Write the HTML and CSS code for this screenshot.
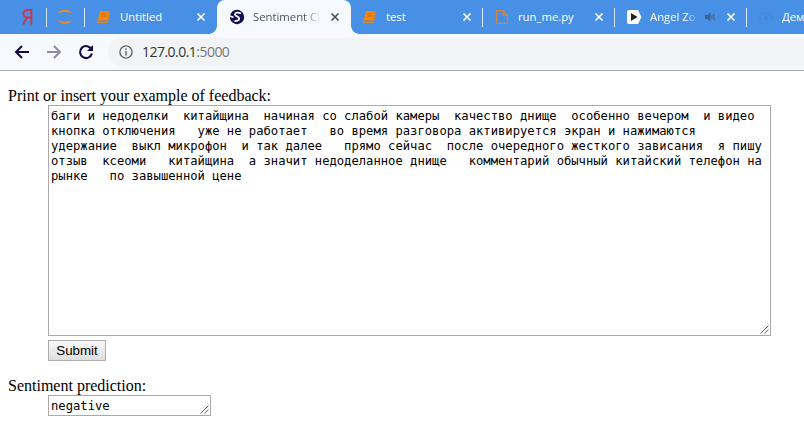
FILE: index.html
```html
<!DOCTYPE html>
<html lang="en">
<head>
<meta charset="utf-8">
<title>Sentiment Classifier</title>
<link rel="stylesheet" href="styles.css">
</head>
<body>
<div class="tabs">
  <div class="tab pinned first"><svg class="ya" width="12" height="18" viewBox="0 0 12 18"><path d="M10.300 1V16.500M10.300 2H6.500C1 2 1 9.500 6.500 9.500H10.300M6 9.500L2 16.500" fill="none" stroke="#c43a50" stroke-width="2.100"/></svg></div>
  <div class="tab pinned"><svg class="jup" width="18" height="18" viewBox="0 0 18 18" fill="#ee8431"><path d="M1.500 6C5-.2 13 .3 16.300 6C12.500 3.400 5.500 3.400 1.500 6ZM1.500 11.500C5.500 14.400 12.500 14.400 16.300 11.500C13 17.500 5 17.500 1.500 11.500Z"/></svg></div>
  <div class="tab"><svg class="icon" width="16" height="16" viewBox="0 0 16 16"><use href="#book"/></svg><span class="title">Untitled</span><svg class="close" width="10" height="10" viewBox="0 0 10 10"><use href="#x"/></svg></div>
  <div class="tab active"><svg class="icon" width="16" height="16" viewBox="0 0 16 16"><circle cx="8" cy="8" r="7.200" fill="#150a50"/><path d="M12 4.500C9 3 6 3.500 6 5.500C6 7.500 10.500 7.500 10.200 9.800C10 11.500 7.500 12.500 5.500 11.800M1 7L4.500 8.500" fill="none" stroke="#f5f8fe" stroke-width="1.900"/></svg><span class="title fade">Sentiment Cl</span><svg class="close" width="10" height="10" viewBox="0 0 10 10"><use href="#x"/></svg></div>
  <div class="tab"><svg class="icon" width="16" height="16" viewBox="0 0 16 16"><use href="#book"/></svg><span class="title">test</span><svg class="close" width="10" height="10" viewBox="0 0 10 10"><use href="#x"/></svg></div>
  <div class="tab"><svg class="icon" width="16" height="16" viewBox="0 0 16 16"><path d="M2.600 1.600H9L13.400 6V14.400H2.600ZM9 1.600V6H13.400" fill="none" stroke="#c8864e" stroke-width="1.400"/></svg><span class="title">run_me.py</span><svg class="close" width="10" height="10" viewBox="0 0 10 10"><use href="#x"/></svg></div>
  <div class="tab"><svg class="icon" width="16" height="16" viewBox="0 0 16 16"><path d="M3 1H12L15.500 8L12 15H3Q1 15 1 13V3Q1 1 3 1Z" fill="#fff"/><path d="M5 4L11.500 8L5 12Z" fill="#222"/></svg><span class="title fade angel">Angel Zo</span><svg class="sound" width="12" height="12" viewBox="0 0 12 12"><path d="M1 4H3.500L6.500 1.500V10.500L3.500 8H1Z" fill="#43638d"/><path d="M8 4V8M10 2.500V9.500" stroke="#43638d"/></svg><svg class="close" width="10" height="10" viewBox="0 0 10 10"><use href="#x"/></svg></div>
  <div class="tab"><svg class="icon" width="16" height="16" viewBox="0 0 16 16"><path d="M2 11V6L5 4L7 6V11M9 11V6L11 4L14 6V11" fill="none" stroke="#3f8edb" stroke-width="2"/></svg><span class="title">Дем</span></div>
</div>
<div class="toolbar">
  <svg class="nav" width="16" height="16" viewBox="0 0 16 16"><path d="M15 8H2M8 2L2 8L8 14" fill="none" stroke="#150a43" stroke-width="2"/></svg>
  <svg class="nav" width="16" height="16" viewBox="0 0 16 16"><path d="M1 8H14M8 2L14 8L8 14" fill="none" stroke="#908ba8" stroke-width="2"/></svg>
  <svg class="nav" width="16" height="16" viewBox="0 0 16 16"><path d="M13.500 5.500A6 6 0 1 0 13.900 9.500" fill="none" stroke="#150a43" stroke-width="2.100"/><path d="M15 1V7H9Z" fill="#150a43"/></svg>
  <div class="address"><svg width="14" height="14" viewBox="0 0 14 14"><circle cx="7" cy="7" r="6.100" fill="none" stroke="#666a6d" stroke-width="1.400"/><path d="M7 6V10.500M7 3.300V4.800" stroke="#666a6d" stroke-width="1.500"/></svg><span class="url">127.0.0.1<span class="port">:5000</span></span></div>
</div>
<main>
  <label for="feedback">Print or insert your example of feedback:</label>
  <div class="box big"><textarea id="feedback" spellcheck="false">баги и недоделки  китайщина  начиная со слабой камеры  качество днище  особенно вечером  и видео
кнопка отключения   уже не работает   во время разговора активируется экран и нажимаются
удержание  выкл микрофон  и так далее   прямо сейчас  после очередного жесткого зависания  я пишу
отзыв  ксеоми   китайщина  а значит недоделанное днище   комментарий обычный китайский телефон на
рынке   по завышенной цене</textarea><svg class="grip" width="9" height="9" viewBox="0 0 9 9"><use href="#grip"/></svg></div>
  <button>Submit</button>
  <label for="result">Sentiment prediction:</label>
  <div class="box small"><textarea id="result" spellcheck="false">negative</textarea><svg class="grip" width="9" height="9" viewBox="0 0 9 9"><use href="#grip"/></svg></div>
</main>
<svg class="defs" width="0" height="0">
  <defs>
    <g id="book"><path d="M4 2H13.500L11 11.500H1.500Z" fill="#f5830f"/><path d="M1.500 11.500L1.800 13.500H11L13.500 4" fill="none" stroke="#d58635" stroke-width="1.500"/><path d="M5.500 4.700H10.500M5 6.900H10" stroke="#bd7c31"/></g>
    <path id="x" d="M1.500 1.500L8.500 8.500M8.500 1.500L1.500 8.500" stroke="currentColor" stroke-width="1.700"/>
    <path id="grip" d="M.5 8.500L8.500 .5M4.500 8.500L8.500 4.500" stroke="#666"/>
  </defs>
</svg>
</body>
</html>
```
FILE: styles.css
```css
body {
  margin: 0;
  height: 432px;
  overflow: hidden;
  background: #fff;
  font: 16px/18px "Liberation Serif", serif;
  color: #000;
}
svg { display: block; flex: none; }
.defs { position: absolute; }
.tabs {
  display: flex;
  width: 804px;
  height: 34px;
  overflow: hidden;
  background: #4790e6;
  color: #fff;
  font: 11.3px/16px "Open Sans", "Noto Sans", sans-serif;
}
.tab {
  box-sizing: border-box;
  display: flex;
  align-items: center;
  flex: none;
  width: 132px;
  height: 34px;
  padding: 0 10px 0 12px;
  background: linear-gradient(#d8e9fb, #d8e9fb) 0 8px / 1px 19px no-repeat;
}
.tab.pinned { width: 38px; padding: 0 0 0 10px; }
.tab.first { width: 46px; padding-left: 21px; background: none; }
.tab.active {
  position: relative;
  width: 134px;
  margin-left: 1px;
  padding-right: 11px;
  background: #f6f9fe;
  color: #48545f;
  border-radius: 8px 8px 0 0;
}
.tab.active::before, .tab.active::after {
  content: "";
  position: absolute;
  bottom: 0;
  width: 8px;
  height: 8px;
}
.tab.active::before { left: -8px; background: radial-gradient(circle at 0 0, transparent 7.5px, #f6f9fe 8px); }
.tab.active::after { right: -8px; background: radial-gradient(circle at 100% 0, transparent 7.5px, #f6f9fe 8px); }
.tab.active + .tab { width: 131px; background: none; padding-left: 11px; }
.icon { margin-right: 8px; }
.title { flex: 1; min-width: 0; overflow: hidden; white-space: nowrap; }
.fade {
  margin-right: 9px;
  -webkit-mask-image: linear-gradient(90deg, #000 75%, transparent);
  mask-image: linear-gradient(90deg, #000 75%, transparent);
}
.angel { margin-right: 6px; }
.sound { margin-right: 10px; }
.toolbar {
  box-sizing: border-box;
  display: flex;
  align-items: center;
  width: 804px;
  height: 37px;
  padding-left: 14px;
  background: #f6f9fe;
  border-bottom: 1px solid #a6a8ad;
}
.nav { margin-right: 16px; }
.address {
  box-sizing: border-box;
  display: flex;
  align-items: center;
  flex: 1;
  height: 28px;
  margin-left: -2px;
  padding-left: 11px;
  border-radius: 14px 0 0 14px;
  background: #f1f3f4;
  font: 14px/20px "Open Sans", "Noto Sans", sans-serif;
  color: #303336;
}
.url { margin-left: 9px; letter-spacing: -0.53px; }
.port { color: #75797d; }
main {
  display: flex;
  flex-direction: column;
  align-items: flex-start;
  padding: 16px 8px 0;
}
label { height: 18px; }
.box { position: relative; margin-left: 40px; }
.big { width: 723px; height: 231px; }
.small { width: 163px; height: 21px; }
textarea {
  display: block;
  box-sizing: border-box;
  width: 100%;
  height: 100%;
  margin: 0;
  padding: 3px 2px 0;
  border: 1px solid #a9a9a9;
  border-radius: 0;
  overflow: hidden;
  resize: none;
  white-space: pre;
  background: #fff;
  color: #000;
  font: 12.18px/15px "DejaVu Sans Mono", monospace;
}
.grip { position: absolute; right: 2px; bottom: 2px; }
button {
  width: 58px;
  height: 21px;
  margin: 4px 0 16px 40px;
  padding: 0;
  border: 1px solid #adadad;
  border-radius: 0;
  background: linear-gradient(#f8f8f8, #dedede);
  color: #000;
  font: 13.333px/17px "Liberation Sans", sans-serif;
}
```
